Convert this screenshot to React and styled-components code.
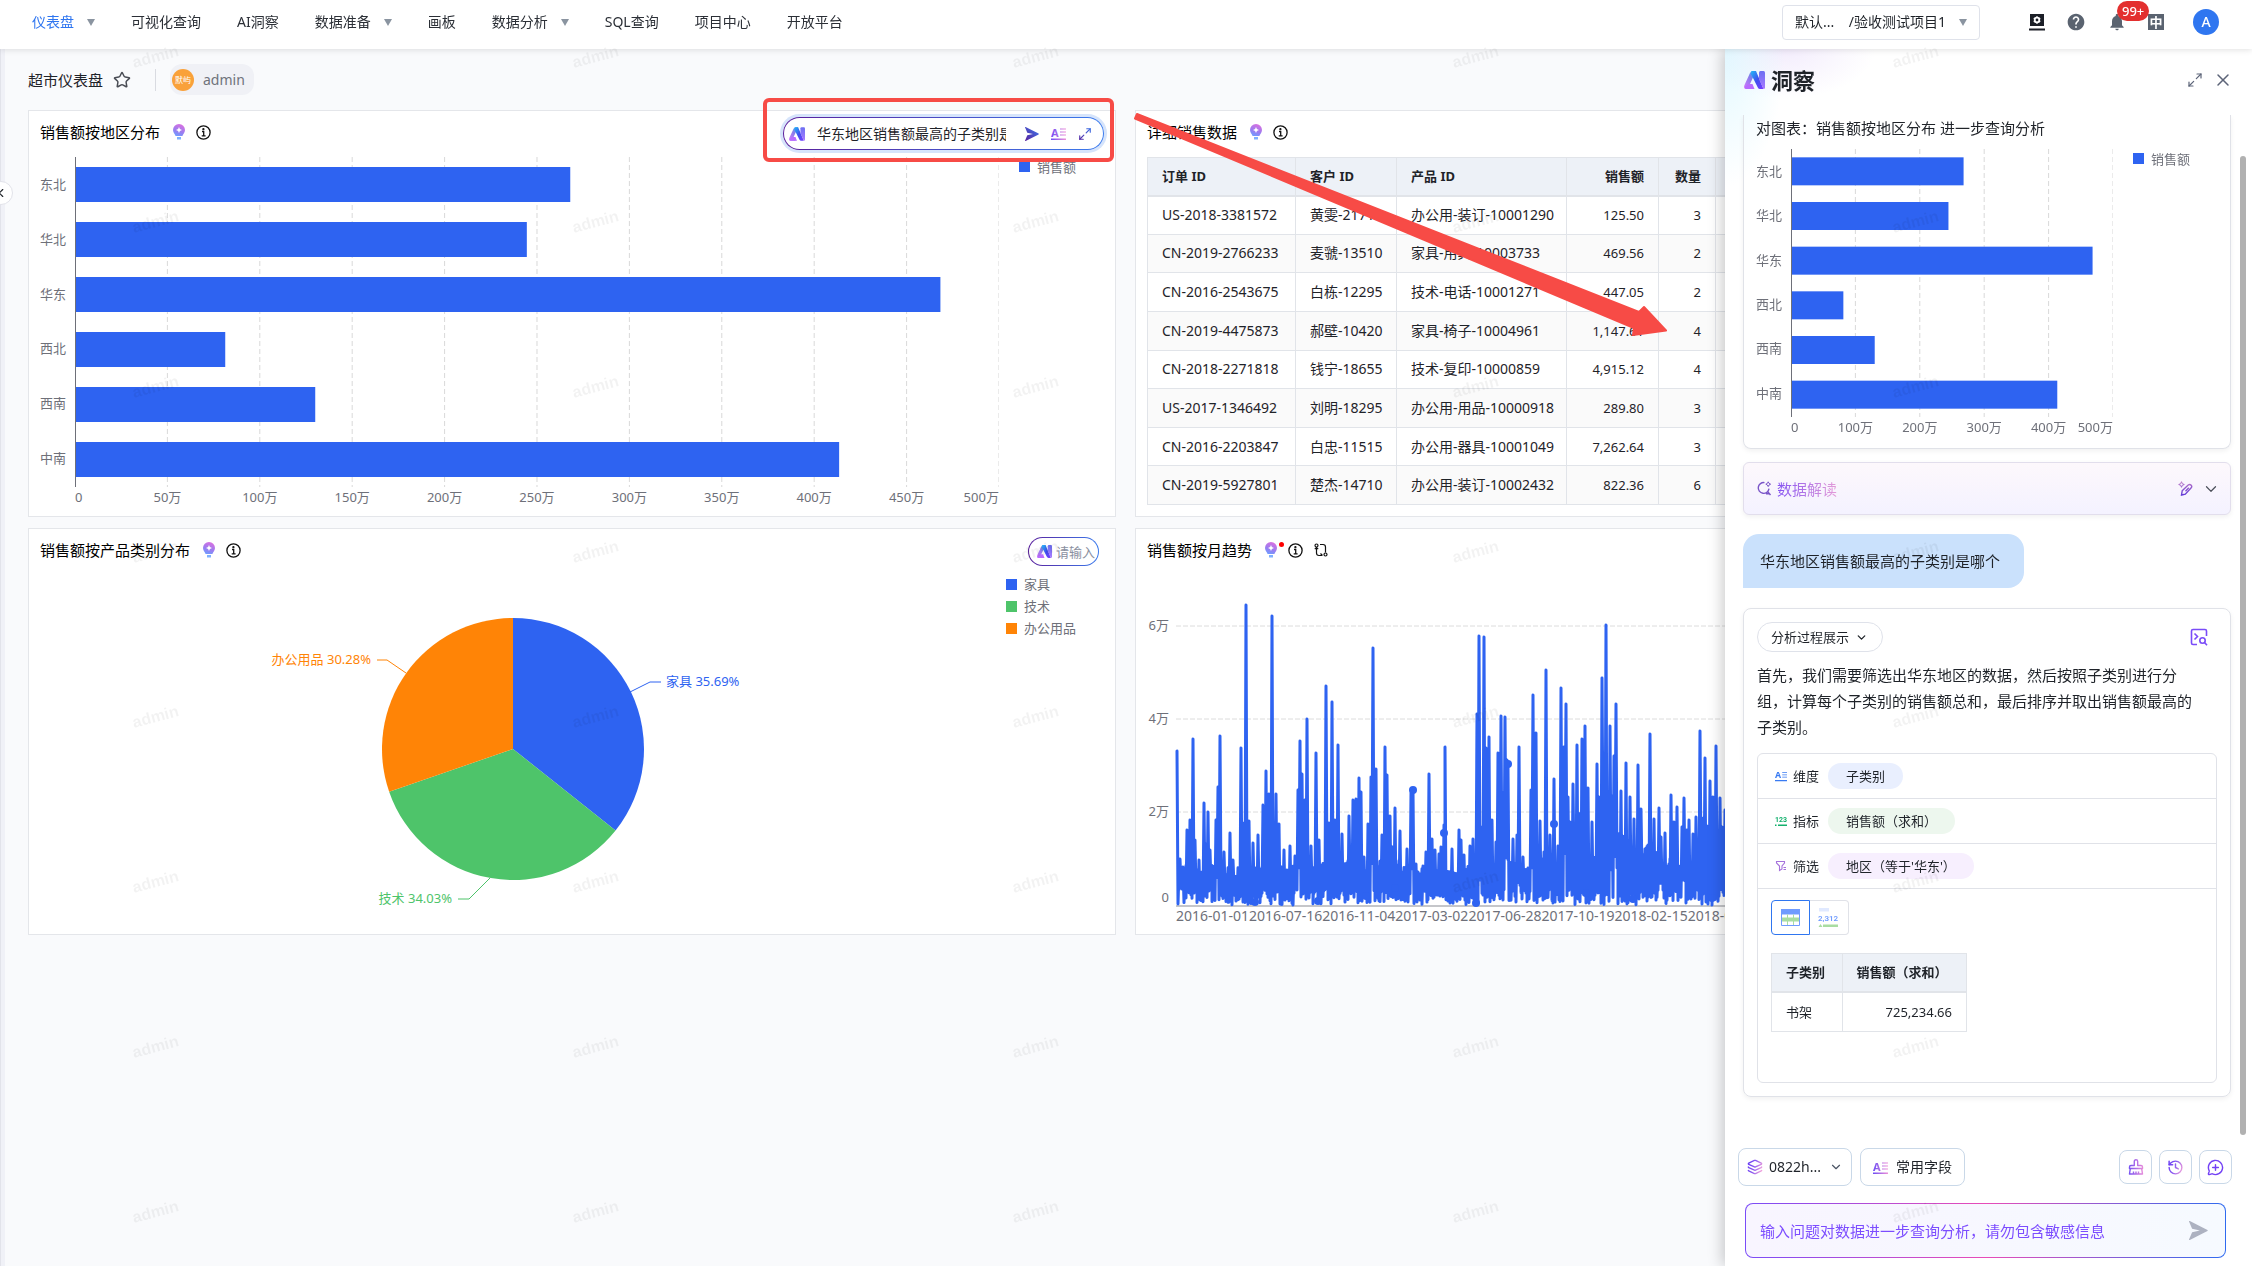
import React from 'react'
import styled, { createGlobalStyle } from 'styled-components'
import {
  Star,
  Maximize2,
  X,
  ChevronDown,
  ChevronLeft,
  Layers,
  History,
  MessageCirclePlus,
} from 'lucide-react'
import { MdHelp, MdNotifications } from 'react-icons/md'

const BLUE = '#2e63f1'
const GREEN = '#4ec46a'
const ORANGE = '#ff8406'
const MARK = '#f74b46'

const navs = [
  { name: '仪表盘', arrow: true, active: true },
  { name: '可视化查询' },
  { name: 'AI洞察' },
  { name: '数据准备', arrow: true },
  { name: '画板' },
  { name: '数据分析', arrow: true },
  { name: 'SQL查询' },
  { name: '项目中心' },
  { name: '开放平台' },
]

const regions = [
  { name: '东北', value: 268 },
  { name: '华北', value: 244.5 },
  { name: '华东', value: 468.3 },
  { name: '西北', value: 81.3 },
  { name: '西南', value: 130 },
  { name: '中南', value: 413.5 },
]

const orders = [
  ['US-2018-3381572', '黄雯-21715', '办公用-装订-10001290', '125.50', '3'],
  ['CN-2019-2766233', '麦虢-13510', '家具-用具-10003733', '469.56', '2'],
  ['CN-2016-2543675', '白栋-12295', '技术-电话-10001271', '447.05', '2'],
  ['CN-2019-4475873', '郝壁-10420', '家具-椅子-10004961', '1,147.61', '4'],
  ['CN-2018-2271818', '钱宁-18655', '技术-复印-10000859', '4,915.12', '4'],
  ['US-2017-1346492', '刘明-18295', '办公用-用品-10000918', '289.80', '3'],
  ['CN-2016-2203847', '白忠-11515', '办公用-器具-10001049', '7,262.64', '3'],
  ['CN-2019-5927801', '楚杰-14710', '办公用-装订-10002432', '822.36', '6'],
]

const dates = [
  '2016-01-01',
  '2016-07-16',
  '2016-11-04',
  '2017-03-02',
  '2017-06-28',
  '2017-10-19',
  '2018-02-15',
  '2018-06-10',
]

// [x, height] of each daily peak
const peaks = [
  [1, 155], [4, 47], [7, 39], [11, 76], [14, 86], [17, 167], [19, 66], [23, 46], [28, 103], [32, 94],
  [34, 56], [40, 86], [42, 119], [44, 170], [48, 54], [54, 73], [57, 46], [65, 158], [70, 301], [73, 85],
  [77, 63], [82, 71], [87, 101], [90, 135], [93, 112], [96, 290], [100, 112], [103, 82], [108, 56], [114, 60],
  [119, 50], [122, 116], [124, 165], [126, 132], [129, 106], [131, 187], [135, 60], [140, 153], [143, 66], [150, 220],
  [153, 83], [156, 204], [159, 86], [162, 161], [166, 72], [173, 90], [177, 106], [180, 107], [183, 128], [185, 114],
  [188, 49], [192, 82], [195, 129], [197, 258], [200, 137], [206, 71], [209, 159], [211, 131], [214, 90], [219, 98],
  [224, 75], [231, 57], [235, 113], [237, 116], [240, 42], [250, 54], [253, 132], [256, 67], [259, 56], [263, 52],
  [265, 59], [268, 81], [269, 159], [276, 57], [283, 76], [285, 66], [288, 51], [294, 60], [297, 67], [301, 192],
  [303, 270], [305, 79], [308, 269], [310, 158], [313, 169], [316, 86], [320, 64], [322, 153], [325, 190], [329, 189],
  [331, 146], [332, 140], [337, 67], [341, 71], [343, 159], [347, 49], [355, 116], [357, 211], [360, 173], [364, 85],
  [370, 236], [374, 71], [378, 127], [382, 60], [385, 218], [388, 159], [390, 202], [392, 109], [394, 84], [397, 122],
  [401, 161], [406, 167], [409, 180], [412, 118], [416, 84], [421, 142], [423, 109], [426, 228], [430, 281], [434, 180],
  [436, 110], [438, 150], [440, 202], [445, 115], [450, 143], [454, 109], [458, 87], [462, 141], [465, 97], [474, 172],
  [478, 87], [483, 98], [485, 69], [489, 73], [495, 111], [498, 84], [501, 99], [506, 79], [508, 108], [511, 76],
  [513, 86], [517, 72], [520, 89], [524, 175], [529, 148], [534, 125], [537, 109], [540, 160], [544, 108], [546, 79],
  [549, 96], [553, 60],
]

const dots = [
  [79, 4], [142, 5], [190, 10], [219, 18], [237, 116], [268, 73], [300, 3], [316, 11],
  [332, 142], [362, 12], [378, 82], [410, 13], [457, 7], [536, 8],
]

const noise = i => {
  const n = Math.sin(i * 12.9898) * 43758.5453
  return n - Math.floor(n)
}

const trendPath = () => {
  const base = 335
  const pts = []
  peaks.forEach(([x, h], i) => {
    const [next, nextH] = peaks[i + 1] || [x + 3, h]
    const body = Math.max(34, Math.min(h, nextH) * 0.55)
    pts.push([x, h])
    pts.push([x + 1, noise(i) > 0.7 ? body * 0.6 : 2 + noise(i) * 24])
    for (let p = x + 2; p < next; p += 1) {
      pts.push([p, body * (0.8 + noise(p) * 0.4)])
      pts.push([p, 1 + noise(p + 7) * 16])
    }
  })
  return pts.map(([x, h], i) => `${i ? 'L' : 'M'}${x + 40} ${(base - h).toFixed(1)}`).join('')
}

const Logo = ({ size = 21 }) => (
  <svg width={size} height={Math.round(size * 0.86)} viewBox="0 0 21 18" aria-hidden="true">
    <path d="M6 2Q7 0 9 0H12L6 13Q5 15 7 15L9 18H2Q-1 18 .5 14Z" fill="url(#lgLeft)" />
    <path d="M1 15.500 4 13H8.500L10.500 18H2Q.5 17.500 1 15.500Z" fill="#b86bff" />
    <path d="M7.500 0H12L19.500 18H16Q14.500 18 13.800 16.500L7 3Z" fill="url(#lgMid)" />
    <path d="M15 1.500Q15 0 16.500 0H19.500Q21 0 21 1.500V16.500Q21 18 19.500 18L15 8Z" fill="url(#lgRight)" />
  </svg>
)

const Bulb = () => (
  <svg width="12" height="16" viewBox="0 0 12 16" aria-hidden="true">
    <path d="M6 0a6 6 0 0 1 6 6c0 2.300-1.500 3.600-2.600 6H2.600C1.500 9.600 0 8.300 0 6a6 6 0 0 1 6-6Z" fill="url(#lgBulb)" />
    <path d="M4 13h4v2.500H4Z" fill="#7fb1ff" />
    <path d="M6 3 6.900 5.100 9 6 6.900 6.900 6 9 5.100 6.900 3 6 5.100 5.100Z" fill="#fff" />
  </svg>
)

const InfoIcon = () => (
  <svg width="15" height="15" viewBox="0 0 15 15" fill="none" stroke="#111" strokeWidth="1.3" aria-hidden="true">
    <circle cx="7.500" cy="7.500" r="6.600" />
    <path d="M6 6.500H7.700V10.700M5.700 10.800H9.600" />
    <circle cx="7.400" cy="4.200" r=".5" />
  </svg>
)

const LoopIcon = () => (
  <svg width="14" height="14" viewBox="0 0 14 14" fill="none" stroke="#111" strokeWidth="1.200" aria-hidden="true">
    <path d="M6 1.500H9Q11.500 1.500 11.500 4V9.500" />
    <path d="M8 12.500H5Q2.500 12.500 2.500 10V4.500" />
    <circle cx="2.500" cy="2.500" r="1.500" />
    <circle cx="11.500" cy="11.500" r="1.500" />
    <path d="M6.500 10.500 8.500 12.500M.8 6.200 2.500 4.500 4.200 6.200" />
  </svg>
)

const SendIcon = ({ size = 14, fill = 'url(#lgSend)' }) => (
  <svg width={size} height={size} viewBox="0 0 14 14" aria-hidden="true">
    <path d="M0 .3Q0-.3.600 0L13.600 6.600Q14 7 13.600 7.400L.6 14Q0 14.300 0 13.700L2.300 8.300 8 7 2.300 5.700Z" fill={fill} />
  </svg>
)

const FieldIcon = ({ size = 15, fill = 'url(#lgField)' }) => (
  <svg width={size} height={size} viewBox="0 0 15 15" aria-hidden="true">
    <text x="0" y="10.500" fontSize="11" fontWeight="700" fontFamily="Noto Sans, sans-serif" fill={fill}>A</text>
    <path d="M9 2.500H15V3.500H9ZM9 5.500H15V6.500H9ZM9 8.500H15V9.500H9ZM0 12.500H15V14H0Z" fill={fill} />
  </svg>
)

const NumberIcon = () => (
  <svg width="12" height="12" viewBox="0 0 12 12" aria-hidden="true">
    <text x="0" y="7" fontSize="7" fontWeight="700" fontFamily="Roboto, sans-serif" fill="#12b06c">123</text>
    <path d="M0 9.500H1.500V11H0ZM3 9.500H12V11H3Z" fill="#12b06c" />
  </svg>
)

const FilterIcon = () => (
  <svg width="12" height="12" viewBox="0 0 12 12" fill="none" stroke="#a673dc" strokeWidth="1.100" aria-hidden="true">
    <path d="M1.500 1.500H9.500V3L7 6V9L4.500 10.500V6L1.500 3ZM8.500 7.500H11M8.500 9.500H11" />
  </svg>
)

const ReadIcon = () => (
  <svg width="15" height="15" viewBox="0 0 15 15" fill="none" stroke="#7a55c8" strokeWidth="1.400" aria-hidden="true">
    <path d="M7.500 1.600A5.400 5.400 0 1 0 12 7.600" />
    <path d="M10.500 10.500 13.500 14M9 12.800H12" />
    <path d="M11.200.8 12 2.400 13.600 3.200 12 4 11.200 5.600 10.400 4 8.800 3.200 10.400 2.400Z" strokeWidth="1" />
  </svg>
)

const MagicPen = () => (
  <svg width="15" height="15" viewBox="0 0 15 15" fill="none" stroke="url(#lgPen)" strokeWidth="1.400" aria-hidden="true">
    <path d="M4.200 9.800 10.200 4Q11.800 2.800 13.200 4.200 14.400 5.600 13 7L7.300 13.200 3.500 14Z" />
    <path d="M7.500 10.200 10.800 6.800" />
    <path d="M3.500.7 4.300 2.700 6.300 3.500 4.300 4.300 3.500 6.300 2.700 4.300.7 3.500 2.700 2.700Z" strokeWidth="1" />
  </svg>
)

const CodeSearch = () => (
  <svg width="18" height="18" viewBox="0 0 18 18" fill="none" stroke="#7a4cf8" strokeWidth="1.600" aria-hidden="true">
    <path d="M7 16.500H3Q1.500 16.500 1.500 15V3Q1.500 1.500 3 1.500H15Q16.500 1.500 16.500 3V8" />
    <path d="M4.500 5.500 7.500 8.500 4.500 11.500" />
    <circle cx="12.500" cy="12.500" r="2.700" />
    <path d="M14.500 14.500 17 17.300" />
  </svg>
)

const BroomIcon = () => (
  <svg width="16" height="16" viewBox="0 0 16 16" fill="none" stroke="url(#lgIcon16)" strokeWidth="1.400" strokeLinejoin="round" aria-hidden="true">
    <path d="M6.300 6.500V2.500Q6.300.8 8 .8T9.700 2.500V6.500H13Q14.500 6.500 14.500 8V9.500H1.500V8Q1.500 6.500 3 6.500Z" />
    <path d="M2.300 9.500 1.500 15H14.500L13.700 9.500M5.500 15V12.500M8 15V12.500M10.500 15V12.500" />
  </svg>
)

const AdminIcon = () => (
  <svg width="16" height="17" viewBox="0 0 16 17" aria-hidden="true">
    <path d="M1 0H15V12H1ZM0 14.500H16V16.500H0Z" fill="#1c1f27" />
    <circle cx="8" cy="6" r="2.300" fill="none" stroke="#fff" strokeWidth="1.800" />
    <path d="M8 2.300V3.500M8 8.500V9.700M4.800 4.100 5.900 4.800M10.100 7.200 11.200 7.900M4.800 7.900 5.900 7.200M10.100 4.800 11.200 4.100" stroke="#fff" strokeWidth="1.400" />
  </svg>
)

const TableTab = () => (
  <svg width="19" height="17" viewBox="0 0 19 17" aria-hidden="true">
    <path d="M.5.500H18.500V16.500H.5Z" fill="#fff" stroke="#6f9bff" />
    <path d="M0 0H19V5.500H0Z" fill="#6f9bff" />
    <path d="M1 8.500H18V12.500H1Z" fill="#a9dda2" />
    <path d="M6.500 5.500V16M12.500 5.500V16" stroke="#a9dda2" />
  </svg>
)

const NumberTab = () => (
  <svg width="22" height="20" viewBox="0 0 22 20" aria-hidden="true">
    <path d="M1 0H11V3.500H1Z" fill="#e0e9ff" />
    <text x="0" y="13" fontSize="8" fontWeight="600" fontFamily="Roboto, sans-serif" fill="#6f9bff">2,312</text>
    <path d="M5 16.500H20V19H5ZM2.500 16 4.500 19H.5Z" fill="#a9dda2" />
  </svg>
)

const Defs = () => (
  <HiddenSvg aria-hidden="true">
    <defs>
      <linearGradient id="lgLeft" x1="1" y1="0" x2="0" y2="1">
        <stop offset="0" stopColor="#27b6f5" />
        <stop offset=".45" stopColor="#8b7bea" />
        <stop offset="1" stopColor="#d57bff" />
      </linearGradient>
      <linearGradient id="lgMid" x1="0" y1="0" x2="1" y2="1">
        <stop offset="0" stopColor="#22b8f6" />
        <stop offset=".5" stopColor="#3f4fee" />
        <stop offset="1" stopColor="#7a3dff" />
      </linearGradient>
      <linearGradient id="lgRight" x1="0" y1="0" x2="0" y2="1">
        <stop offset="0" stopColor="#6c6ff2" />
        <stop offset="1" stopColor="#a87bff" />
      </linearGradient>
      <linearGradient id="lgBulb" x1=".7" y1="0" x2=".3" y2="1">
        <stop offset="0" stopColor="#dc6fe0" />
        <stop offset=".6" stopColor="#9a7df0" />
        <stop offset="1" stopColor="#6f9cff" />
      </linearGradient>
      <linearGradient id="lgSend" x1="0" y1="1" x2="1" y2="0">
        <stop offset="0" stopColor="#5a1f9c" />
        <stop offset="1" stopColor="#3a7bee" />
      </linearGradient>
      <linearGradient id="lgField" gradientUnits="userSpaceOnUse" x1="0" y1="0" x2="15" y2="0">
        <stop offset="0" stopColor="#6d4df5" />
        <stop offset="1" stopColor="#ef8fd8" />
      </linearGradient>
      <linearGradient id="lgPen" gradientUnits="userSpaceOnUse" x1="0" y1="0" x2="0" y2="15">
        <stop offset="0" stopColor="#c07bc4" />
        <stop offset="1" stopColor="#5b35d8" />
      </linearGradient>
      <linearGradient id="lgIcon16" gradientUnits="userSpaceOnUse" x1="0" y1="0" x2="16" y2="0">
        <stop offset="0" stopColor="#6d4df5" />
        <stop offset="1" stopColor="#ef8fd8" />
      </linearGradient>
      <linearGradient id="lgIcon24" gradientUnits="userSpaceOnUse" x1="2" y1="2" x2="24" y2="10">
        <stop offset="0" stopColor="#6236f5" />
        <stop offset=".5" stopColor="#8c5cf0" />
        <stop offset="1" stopColor="#ef9fdc" />
      </linearGradient>
      <linearGradient id="lgExpand" gradientUnits="userSpaceOnUse" x1="0" y1="24" x2="24" y2="0">
        <stop offset="0" stopColor="#5a1f9c" />
        <stop offset="1" stopColor="#3a7bee" />
      </linearGradient>
    </defs>
  </HiddenSvg>
)

const BarChart = ({ step, height, bar }) => {
  const ticks = []
  for (let v = 0; v <= 500; v += step) ticks.push(v)
  const slot = height / regions.length
  return (
    <BarWrap>
      <Cats>
        {regions.map(r => <span key={r.name}>{r.name}</span>)}
      </Cats>
      <Plot>
        <svg width="100%" height={height} role="img" aria-label="销售额按地区分布">
          {ticks.slice(1).map(v => (
            <line key={v} x1={`${v / 5}%`} x2={`${v / 5}%`} y1="0" y2={height} stroke="#d9d9d9" strokeDasharray="5 3" />
          ))}
          {regions.map((r, i) => (
            <rect key={r.name} x="0" y={i * slot + (slot - bar) / 2} width={`${r.value / 5}%`} height={bar} fill={BLUE} />
          ))}
          <line x1="0" x2="0" y1="0" y2={height} stroke="#6e7079" strokeWidth="2" />
        </svg>
        <Ticks>
          {ticks.map(v => <span key={v}>{v ? `${v}万` : '0'}</span>)}
        </Ticks>
      </Plot>
    </BarWrap>
  )
}

const PieChart = () => {
  const cx = 270
  const cy = 178
  const r = 131
  const at = p => {
    const a = p * Math.PI * 2
    return `${(cx + r * Math.sin(a)).toFixed(2)} ${(cy - r * Math.cos(a)).toFixed(2)}`
  }
  const slice = (a, b) => `M${cx} ${cy}L${at(a)}A${r} ${r} 0 0 1 ${at(b)}Z`
  return (
    <svg width="540" height="362" role="img" aria-label="销售额按产品类别分布">
      <path d={slice(0, 0.3569)} fill={BLUE} />
      <path d={slice(0.3569, 0.6972)} fill={GREEN} />
      <path d={slice(0.6972, 1)} fill={ORANGE} />
      <path d="M387 121 407 111H418" fill="none" stroke={BLUE} />
      <path d="M247 307 226 328H215" fill="none" stroke={GREEN} />
      <path d="M163 102 144 89H134" fill="none" stroke={ORANGE} />
      <ChartText x="423" y="115" fill={BLUE}>家具 35.69%</ChartText>
      <ChartText x="209" y="332" fill={GREEN} textAnchor="end">技术 34.03%</ChartText>
      <ChartText x="128" y="93" fill={ORANGE} textAnchor="end">办公用品 30.28%</ChartText>
    </svg>
  )
}

const TrendChart = () => (
  <div>
    <TrendSvg width="100%" height="336" role="img" aria-label="销售额按月趋势">
      {[55, 148, 241].map((y, i) => (
        <g key={y}>
          <line x1="40" x2="100%" y1={y} y2={y} stroke="#dcdcdc" strokeDasharray="5 2" />
          <ChartText x="33" y={y + 4} fill="#6e7079" textAnchor="end">{`${6 - i * 2}万`}</ChartText>
        </g>
      ))}
      <ChartText x="33" y="331" fill="#6e7079" textAnchor="end">0</ChartText>
      <line x1="40" x2="100%" y1="335" y2="335" stroke="#8b8d94" />
      <path d={trendPath()} fill="none" stroke={BLUE} strokeWidth="3" strokeLinejoin="round" strokeLinecap="round" />
      {dots.map(([x, h]) => <circle key={x} cx={x + 40} cy={335 - h} r="4" fill={BLUE} />)}
    </TrendSvg>
    <Dates>
      {dates.map(d => <span key={d}>{d}</span>)}
    </Dates>
  </div>
)

const CardTitle = ({ children, dot, loop, ask }) => (
  <CardHead>
    <h2>{children}</h2>
    <BulbWrap $dot={dot}><Bulb /></BulbWrap>
    <InfoIcon />
    {loop && <LoopIcon />}
    {ask}
  </CardHead>
)

const DashboardCards = () => (
  <Board>
    <Card>
      <CardTitle
        ask={
          <Ask $active>
            <Logo size={16} />
            <AskInput $wide aria-label="提问" defaultValue="华东地区销售额最高的子类别是哪个" />
            <IconButton aria-label="发送"><SendIcon /></IconButton>
            <IconButton aria-label="常用字段"><FieldIcon /></IconButton>
            <IconButton aria-label="展开"><Maximize2 size={14} color="url(#lgExpand)" strokeWidth={2} /></IconButton>
          </Ask>
        }
      >
        销售额按地区分布
      </CardTitle>
      <CardBody $top>
        <Grow $left>
          <BarChart step={50} height={330} bar={35} />
        </Grow>
        <Legend $bar>
          <li><Swatch $color={BLUE} />销售额</li>
        </Legend>
      </CardBody>
    </Card>
    <Card>
      <CardTitle>详细销售数据</CardTitle>
      <TableBox>
        <OrderTable>
          <colgroup>
            <col width="148" />
            <col width="101" />
            <col width="170" />
            <col width="92" />
            <col width="57" />
            <col />
          </colgroup>
          <thead>
            <tr>
              <th>订单 ID</th>
              <th>客户 ID</th>
              <th>产品 ID</th>
              <Num as="th">销售额</Num>
              <Num as="th">数量</Num>
              <th />
            </tr>
          </thead>
          <tbody>
            {orders.map(o => (
              <tr key={o[0]}>
                <td>{o[0]}</td>
                <td>{o[1]}</td>
                <td>{o[2]}</td>
                <Num>{o[3]}</Num>
                <Num>{o[4]}</Num>
                <td />
              </tr>
            ))}
          </tbody>
        </OrderTable>
      </TableBox>
    </Card>
    <Card>
      <CardTitle
        ask={
          <Ask>
            <Logo size={15} />
            <AskInput aria-label="提问" placeholder="请输入" />
          </Ask>
        }
      >
        销售额按产品类别分布
      </CardTitle>
      <CardBody>
        <Grow $center><PieChart /></Grow>
        <Legend>
          <li><Swatch $color={BLUE} />家具</li>
          <li><Swatch $color={GREEN} />技术</li>
          <li><Swatch $color={ORANGE} />办公用品</li>
        </Legend>
      </CardBody>
    </Card>
    <Card>
      <CardTitle dot loop>销售额按月趋势</CardTitle>
      <TrendChart />
    </Card>
  </Board>
)

const Insight = () => (
  <Drawer>
    <DrawerHead>
      <Logo size={21} />
      <h2>洞察</h2>
      <IconButton aria-label="展开"><Maximize2 size={16} color="#5c6478" strokeWidth={1.8} /></IconButton>
      <IconButton aria-label="关闭"><X size={20} color="#5c6478" strokeWidth={1.8} /></IconButton>
    </DrawerHead>
    <DrawerBody>
      <Talk>
        <ChartCard>
          <p>对图表：销售额按地区分布 进一步查询分析</p>
          <Row>
            <Grow>
              <BarChart step={100} height={268} bar={28} />
            </Grow>
            <Legend $small>
              <li><Swatch $color={BLUE} />销售额</li>
            </Legend>
          </Row>
        </ChartCard>
        <ReadBox>
          <ReadIcon />
          <span>数据解读</span>
          <IconButton aria-label="生成解读"><MagicPen /></IconButton>
          <IconButton aria-label="展开解读"><ChevronDown size={18} color="#4b4f59" strokeWidth={1.6} /></IconButton>
        </ReadBox>
        <Bubble>华东地区销售额最高的子类别是哪个</Bubble>
        <Answer>
          <AnswerHead>
            <ProcessButton>分析过程展示<ChevronDown size={13} strokeWidth={2.4} /></ProcessButton>
            <IconButton aria-label="查看查询"><CodeSearch /></IconButton>
          </AnswerHead>
          <Explain>
            首先，我们需要筛选出华东地区的数据，然后按照子类别进行分组，计算每个子类别的销售额总和，最后排序并取出销售额最高的子类别。
          </Explain>
          <Result>
            <Cond>
              <FieldIcon size={12} fill="#3a7bf2" />维度<Tag $bg="#e9effe">子类别</Tag>
            </Cond>
            <Cond>
              <NumberIcon />指标<Tag $bg="#edf7ee">销售额（求和）</Tag>
            </Cond>
            <Cond>
              <FilterIcon />筛选<Tag $bg="#f7effe">地区（等于'华东'）</Tag>
            </Cond>
            <ResultBody>
              <Row>
                <ViewTab $on aria-label="表格"><TableTab /></ViewTab>
                <ViewTab aria-label="指标卡"><NumberTab /></ViewTab>
              </Row>
              <ResultTable>
                <thead>
                  <tr>
                    <th>子类别</th>
                    <th>销售额（求和）</th>
                  </tr>
                </thead>
                <tbody>
                  <tr>
                    <td>书架</td>
                    <Num>725,234.66</Num>
                  </tr>
                </tbody>
              </ResultTable>
            </ResultBody>
          </Result>
        </Answer>
      </Talk>
      <Thumb />
    </DrawerBody>
    <DrawerFoot>
      <Tools>
        <ToolBox as="label">
          <Layers size={16} color="url(#lgIcon24)" />
          <DataSelect aria-label="数据集">
            <option>0822h...</option>
          </DataSelect>
          <ChevronDown size={14} color="#4b5565" />
        </ToolBox>
        <ToolBox $wide><FieldIcon size={15} />常用字段</ToolBox>
        <Right>
          <SquareButton aria-label="清空"><BroomIcon /></SquareButton>
          <SquareButton aria-label="历史"><History size={17} color="url(#lgIcon24)" /></SquareButton>
          <SquareButton aria-label="新对话"><MessageCirclePlus size={17} color="#7341f5" /></SquareButton>
        </Right>
      </Tools>
      <Question>
        <input aria-label="输入问题" placeholder="输入问题对数据进一步查询分析，请勿包含敏感信息" />
        <IconButton aria-label="发送"><SendIcon size={19} fill="#adb2c1" /></IconButton>
      </Question>
    </DrawerFoot>
  </Drawer>
)

const App = () => (
  <Page>
    <Global />
    <Defs />
    <Header>
      <Nav>
        {navs.map(n => (
          <NavLink key={n.name} href="#" $active={n.active}>
            {n.name}
            {n.arrow && <Caret />}
          </NavLink>
        ))}
      </Nav>
      <Project>
        <select aria-label="项目">
          <option>{'默认...\u00a0\u00a0\u00a0\u00a0/验收测试项目1'}</option>
        </select>
        <Caret />
      </Project>
      <HeadIcons>
        <IconButton aria-label="管理"><AdminIcon /></IconButton>
        <IconButton aria-label="帮助"><MdHelp size={20} color="#5a6370" /></IconButton>
        <Bell aria-label="通知">
          <MdNotifications size={20} color="#5a6370" />
          <b>99+</b>
        </Bell>
        <Lang>中</Lang>
        <Avatar>A</Avatar>
      </HeadIcons>
    </Header>
    <Main>
      <Side />
      <Fold aria-label="展开侧栏"><ChevronLeft size={14} strokeWidth={2} /></Fold>
      <Content>
        <Bar>
          <h1>超市仪表盘</h1>
          <IconButton aria-label="收藏"><Star size={18} color="#4a4d55" strokeWidth={2} /></IconButton>
          <Divider />
          <Owner><i>默屿</i>admin</Owner>
        </Bar>
        <DashboardCards />
      </Content>
    </Main>
    <Insight />
    <MarkBox />
    <MarkArrow viewBox="0 0 560 240" aria-hidden="true">
      <path
        d="M15 18.500 17 14 519 212 524 207 546 230.500 513 235 514 228Z"
        fill={MARK}
        stroke={MARK}
        strokeWidth="2"
        strokeLinejoin="round"
      />
    </MarkArrow>
    <Watermark aria-hidden="true">
      {Array.from({ length: 40 }, (_, i) => <span key={i}>admin</span>)}
    </Watermark>
  </Page>
)

export default App

const Global = createGlobalStyle`
  *{
    box-sizing: border-box;
  }
  body{
    margin: 0;
    color: #1f2329;
    background: #f9fafc;
    font: 14px/20px "Noto Sans", "Noto Sans CJK SC", sans-serif;
  }
  h1, h2, p, ul{
    margin: 0;
    padding: 0;
    font-weight: 400;
  }
  button, input, select{
    font: inherit;
    color: inherit;
  }
  svg{
    flex: none;
  }
`

const HiddenSvg = styled.svg`
  position: absolute;
  width: 0;
  height: 0;
`

const Page = styled.div`
  position: relative;
  display: flex;
  flex-direction: column;
  min-height: 100vh;
  overflow: hidden;
`

const Header = styled.header`
  position: relative;
  z-index: 5;
  display: flex;
  align-items: center;
  height: 49px;
  padding: 0 33px 5px 32px;
  background: #fff;
  box-shadow: 0 1px 6px rgba(0, 0, 0, 0.12);
`

const Nav = styled.nav`
  display: flex;
  flex: 1;
  gap: 36px;
`

const NavLink = styled.a`
  display: flex;
  align-items: center;
  gap: 13px;
  color: ${p => (p.$active ? '#2f76f0' : '#2b2f36')};
  text-decoration: none;
`

const Caret = styled.i`
  border: 4px solid transparent;
  border-top: 7px solid #8a94a0;
  border-bottom: 0;
`

const Project = styled.label`
  display: flex;
  align-items: center;
  height: 35px;
  width: 198px;
  padding: 0 12px;
  border: 1px solid #dfe2ea;
  border-radius: 4px;
  select{
    flex: 1;
    min-width: 0;
    padding: 0;
    border: 0;
    appearance: none;
    background: none;
  }
`

const HeadIcons = styled.div`
  display: flex;
  align-items: center;
  margin-left: 49px;
`

const IconButton = styled.button`
  display: flex;
  align-items: center;
  justify-content: center;
  padding: 0;
  border: 0;
  background: none;
  ${HeadIcons} > &{
    margin-right: 21px;
  }
`

const Bell = styled(IconButton)`
  position: relative;
  b{
    position: absolute;
    left: 10px;
    top: -11px;
    padding: 0 5px;
    border-radius: 10px;
    color: #fff;
    background: #e3302f;
    font-size: 13px;
    font-weight: 500;
  }
`

const Lang = styled.span`
  width: 16px;
  margin: 0 29px 0 0;
  color: #fff;
  background: #5a6370;
  font-size: 13px;
  font-weight: 700;
  line-height: 16px;
  text-align: center;
`

const Avatar = styled.span`
  width: 26px;
  border-radius: 50%;
  color: #fff;
  background: #2f76f0;
  font-weight: 500;
  line-height: 26px;
  text-align: center;
`

const Main = styled.main`
  position: relative;
  display: flex;
  flex: 1;
`

const Side = styled.aside`
  width: 5px;
  background: #f0f1f7;
  border-left: 1px solid #e2e3ea;
`

const Fold = styled(IconButton)`
  position: absolute;
  left: -11px;
  top: 132px;
  width: 24px;
  height: 24px;
  border: 1px solid #e2e3ea;
  border-radius: 50%;
  background: #fff;
`

const Content = styled.div`
  flex: 1;
  min-width: 0;
  padding: 0 29px 0 23px;
`

const Bar = styled.div`
  display: flex;
  align-items: center;
  height: 61px;
  h1{
    margin-right: 10px;
    font-size: 15px;
  }
`

const Divider = styled.i`
  height: 22px;
  margin: 0 14px 0 24px;
  border-left: 1px solid #d9dbe1;
`

const Owner = styled.span`
  display: flex;
  align-items: center;
  gap: 9px;
  height: 31px;
  padding: 0 9px 0 2px;
  border-radius: 12px;
  color: #6f737b;
  background: #f0f1f6;
  i{
    width: 22px;
    border-radius: 50%;
    color: #fff;
    background: #f9a13a;
    font-size: 8px;
    font-style: normal;
    line-height: 22px;
    text-align: center;
  }
`

const Board = styled.div`
  display: grid;
  grid-template-columns: minmax(0, 1fr) minmax(0, 1fr);
  gap: 11px 19px;
`

const Card = styled.section`
  min-height: 407px;
  border: 1px solid #e4e6ea;
  background: #fff;
`

const CardHead = styled.header`
  display: flex;
  align-items: center;
  gap: 11px;
  height: 42px;
  padding: 0 11px;
  h2{
    margin-right: 2px;
    color: #000;
    font-size: 15px;
  }
`

const BulbWrap = styled.span`
  position: relative;
  display: flex;
  &::after{
    content: '';
    display: ${p => (p.$dot ? 'block' : 'none')};
    position: absolute;
    left: 14px;
    top: 0;
    width: 5px;
    height: 5px;
    border-radius: 50%;
    background: #f00;
  }
`

const Ask = styled.div`
  display: flex;
  align-items: center;
  gap: ${p => (p.$active ? 12 : 4)}px;
  height: ${p => (p.$active ? 33 : 29)}px;
  margin: 3px ${p => (p.$active ? 0 : 5)}px 0 auto;
  padding: 0 ${p => (p.$active ? '11px 0 5px' : '3px 0 8px')};
  border: 1px solid transparent;
  border-radius: 17px;
  background:
    linear-gradient(#fff, #fff) padding-box,
    linear-gradient(90deg, #5a1f9c, #3a7bee) border-box;
  box-shadow: 0 0 0 ${p => (p.$active ? 3 : 0)}px #d6e4fb;
`

const AskInput = styled.input`
  width: ${p => (p.$wide ? 189 : 39)}px;
  margin-right: ${p => (p.$wide ? 7 : 0)}px;
  padding: 0;
  border: 0;
  outline: 0;
  background: none;
  font-size: ${p => (p.$wide ? 14 : 13)}px;
  &::placeholder{
    color: #8a90a0;
  }
`

const CardBody = styled.div`
  display: flex;
  padding-top: ${p => (p.$top ? 4 : 0)}px;
`

const Grow = styled.div`
  flex: 1;
  min-width: 0;
  padding-left: ${p => (p.$left ? 11 : 0)}px;
  ${p => p.$center && `
    display: flex;
    justify-content: center;
  `}
`

const Legend = styled.ul`
  flex: none;
  width: ${p => (p.$bar ? 116 : p.$small ? 105 : 118)}px;
  padding: ${p => (p.$bar || p.$small ? '0 0 0 20px' : '2px 0 0 9px')};
  list-style: none;
  color: #6e7079;
  font-size: 13px;
  li{
    display: flex;
    align-items: center;
    gap: 7px;
    height: ${p => (p.$bar || p.$small ? 19 : 22)}px;
  }
`

const Swatch = styled.i`
  width: 11px;
  height: 11px;
  background: ${p => p.$color};
`

const BarWrap = styled.div`
  display: flex;
  gap: 9px;
  color: #6e7079;
  font-size: 13px;
`

const Cats = styled.div`
  display: grid;
  grid-auto-rows: 1fr;
  align-items: center;
  margin-bottom: 22px;
`

const Plot = styled.div`
  flex: 1;
  min-width: 0;
  svg{
    display: block;
  }
`

const Ticks = styled.div`
  display: flex;
  justify-content: space-between;
  white-space: nowrap;
  span{
    display: flex;
    justify-content: center;
    width: 0;
  }
  span:first-child{
    justify-content: flex-start;
  }
  span:last-child{
    justify-content: flex-end;
  }
`

const ChartText = styled.text`
  font-size: 13px;
`

const TrendSvg = styled.svg`
  display: block;
`

const Dates = styled.div`
  display: flex;
  padding-left: 40px;
  color: #6e7079;
  line-height: 18px;
  white-space: nowrap;
`

const TableBox = styled.div`
  padding: 4px 11px 0;
`

const DataTable = styled.table`
  border-collapse: collapse;
  font-size: 13px;
  th, td{
    height: 38px;
    padding: 0 14px;
    border: 1px solid #e1e4e9;
    text-align: left;
    white-space: nowrap;
  }
  th{
    background: #edf1f7;
    border-bottom-width: 2px;
    font-weight: 700;
  }
`

const OrderTable = styled(DataTable)`
  table-layout: fixed;
  width: 100%;
  height: 348px;
  td{
    font-size: 14px;
  }
  tbody tr:nth-child(even){
    background: #fafafa;
  }
`

const Num = styled.td`
  && {
    font-size: 13px;
    text-align: right;
  }
`

const Drawer = styled.aside`
  position: fixed;
  top: 49px;
  right: 0;
  bottom: 0;
  z-index: 4;
  display: flex;
  flex-direction: column;
  width: 527px;
  background:
    radial-gradient(ellipse at 0 0, rgba(215, 246, 255, 0.7), rgba(255, 255, 255, 0) 60px) no-repeat,
    radial-gradient(ellipse 90px 50px at 60px 0, rgba(240, 232, 252, 0.8), rgba(255, 255, 255, 0)) no-repeat,
    #fff;
  box-shadow: -3px 0 14px rgba(0, 0, 0, 0.2);
`

const DrawerHead = styled.header`
  display: flex;
  align-items: center;
  gap: 6px;
  height: 66px;
  padding: 0 19px 5px 19px;
  h2{
    flex: 1;
    font-size: 22px;
    font-weight: 700;
    line-height: 30px;
  }
  button + button{
    margin-left: 4px;
  }
`

const DrawerBody = styled.div`
  display: flex;
  flex: 1;
  gap: 9px;
  min-height: 0;
  padding: 0 6px 0 18px;
  overflow: hidden;
`

const Talk = styled.div`
  flex: 1;
  min-width: 0;
`

const Thumb = styled.div`
  width: 6px;
  height: 979px;
  margin-top: 41px;
  border-radius: 3px;
  background: #b1b1b1;
`

const Row = styled.div`
  display: flex;
`

const ChartCard = styled.section`
  padding: 0 12px 11px;
  border: 1px solid #e0e2e8;
  border-top: 0;
  border-radius: 0 0 8px 8px;
  box-shadow: 0 2px 5px rgba(0, 0, 0, 0.06);
  p{
    margin-bottom: 7px;
    font-size: 15px;
    line-height: 27px;
  }
`

const ReadBox = styled.section`
  display: flex;
  align-items: center;
  height: 53px;
  margin-top: 13px;
  padding: 0 10px 0 13px;
  border: 1px solid #e2deec;
  border-radius: 6px;
  background: linear-gradient(#fdf8fc, #f4f2ff);
  box-shadow: 0 2px 5px rgba(0, 0, 0, 0.06);
  span{
    margin: 0 auto 0 5px;
    color: transparent;
    background: linear-gradient(90deg, #8452f2, #e59cd8);
    background-clip: text;
    font-size: 15px;
  }
  button + button{
    margin-left: 9px;
  }
`

const Bubble = styled.p`
  width: fit-content;
  margin: 19px 0 20px;
  padding: 0 24px 0 17px;
  border-radius: 16px 16px 16px 0;
  background: #cae1fc;
  font-size: 15px;
  line-height: 54px;
`

const Answer = styled.section`
  padding: 13px;
  border: 1px solid #e0e2e8;
  border-radius: 8px;
  box-shadow: 0 2px 5px rgba(0, 0, 0, 0.06);
`

const AnswerHead = styled.div`
  display: flex;
  align-items: center;
  justify-content: space-between;
  padding-right: 9px;
`

const ProcessButton = styled.button`
  display: flex;
  align-items: center;
  gap: 6px;
  height: 30px;
  padding: 0 14px 0 13px;
  border: 1px solid #dfe2ea;
  border-radius: 15px;
  background: #fff;
  font-size: 13px;
`

const Explain = styled.p`
  width: 448px;
  margin: 10px 0 13px;
  font-size: 15px;
  line-height: 26px;
`

const Result = styled.div`
  border: 1px solid #e0e2e8;
  border-radius: 6px;
`

const Cond = styled.div`
  display: flex;
  align-items: center;
  gap: 6px;
  height: 45px;
  padding: 0 17px;
  border-bottom: 1px solid #e0e2e8;
  font-size: 13px;
`

const Tag = styled.span`
  margin-left: 3px;
  padding: 0 18px;
  border-radius: 13px;
  background: ${p => p.$bg};
  line-height: 26px;
`

const ResultBody = styled.div`
  padding: 11px 13px 50px;
`

const ViewTab = styled.button`
  display: flex;
  align-items: center;
  justify-content: center;
  width: 39px;
  height: 35px;
  padding: 0;
  border: 1px solid ${p => (p.$on ? '#2f76f0' : '#e0e2e8')};
  border-radius: ${p => (p.$on ? '4px 0 0 4px' : '0 4px 4px 0')};
  border-left-width: ${p => (p.$on ? 1 : 0)}px;
  background: #fff;
`

const ResultTable = styled(DataTable)`
  width: 196px;
  height: 79px;
  margin-top: 18px;
`

const DrawerFoot = styled.footer`
  padding: 10px 20px 8px 13px;
`

const Tools = styled.div`
  display: flex;
  align-items: center;
  gap: 8px;
`

const ToolBox = styled.button`
  display: flex;
  align-items: center;
  gap: ${p => (p.$wide ? 8 : 6)}px;
  height: 38px;
  padding: 0 ${p => (p.$wide ? 12 : 8)}px;
  border: 1px solid #c9d8e8;
  border-radius: 8px;
  background: #fff;
`

const DataSelect = styled.select`
  width: 54px;
  padding: 0;
  border: 0;
  appearance: none;
  background: none;
`

const Right = styled.div`
  display: flex;
  gap: 7px;
  margin-left: auto;
`

const SquareButton = styled(IconButton)`
  width: 33px;
  height: 34px;
  border: 1px solid #c9d8e8;
  border-radius: 8px;
  background: #fff;
`

const Question = styled.div`
  display: flex;
  align-items: center;
  height: 55px;
  margin: 17px 6px 0 7px;
  padding: 0 17px 0 14px;
  border: 1px solid transparent;
  border-radius: 8px;
  background:
    linear-gradient(90deg, #f8f5ff, #f6faff) padding-box,
    linear-gradient(90deg, #7a4cf8, #e84cb8 50%, #2f6bf0) border-box;
  input{
    flex: 1;
    padding: 0;
    border: 0;
    outline: 0;
    background: none;
    font-size: 15px;
  }
  input::placeholder{
    color: #7c4dff;
  }
`

const MarkBox = styled.div`
  position: absolute;
  left: 763px;
  top: 98px;
  width: 351px;
  height: 64px;
  border: 4px solid ${MARK};
  border-radius: 6px;
  pointer-events: none;
`

const MarkArrow = styled.svg`
  position: absolute;
  left: 1120px;
  top: 100px;
  width: 560px;
  height: 240px;
  pointer-events: none;
`

const Watermark = styled.div`
  position: absolute;
  inset: -26px 0 0 -64px;
  z-index: 6;
  display: grid;
  grid-template-columns: repeat(5, 440px);
  grid-auto-rows: 165px;
  place-items: center;
  overflow: hidden;
  color: rgba(0, 0, 0, 0.05);
  font-family: "Liberation Sans", sans-serif;
  font-size: 16px;
  font-weight: 700;
  pointer-events: none;
  span{
    transform: rotate(-15deg);
  }
`
